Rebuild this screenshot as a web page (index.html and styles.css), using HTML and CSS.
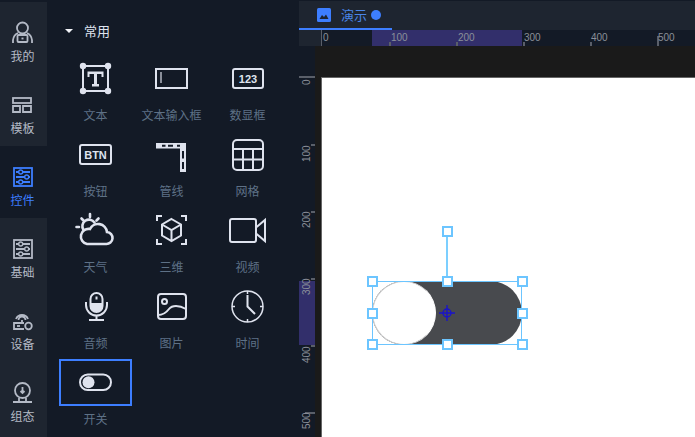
FILE: index.html
```html
<!DOCTYPE html>
<html lang="en">
<head>
    <meta charset="UTF-8">
    <meta name="viewport" content="width=device-width, initial-scale=1.0">
    <title>组态编辑器</title>
    <link rel="stylesheet" href="styles.css">
</head>
<body>
    <div class="app">
        <nav class="nav">
            <div class="nav-item">
                <svg class="nav-icon" viewBox="0 0 25 25">
                    <circle cx="12.5" cy="8" r="5.5"/>
                    <path d="M3 23v-3a9 9 0 0 1 5-7M22 23v-3a9 9 0 0 0-5-7"/>
                    <rect x="7.500" y="15" width="10" height="7" rx="1"/>
                    <path d="M11.500 18.500h2"/>
                </svg>
                <span>我的</span>
            </div>
            <div class="nav-item">
                <svg class="nav-icon" viewBox="0 0 25 25">
                    <rect x="3" y="6" width="18" height="5"/>
                    <path d="M3 14h7v6H3zM13 14h8v6h-8z"/>
                </svg>
                <span>模板</span>
            </div>
            <div class="nav-item active">
                <svg class="nav-icon" viewBox="0 0 25 25">
                    <rect x="4" y="4" width="18" height="18"/>
                    <path d="M6 8h14M6 13h14M6 18h14"/>
                    <circle class="knob" cx="10.700" cy="8" r="2"/>
                    <circle class="knob" cx="16.700" cy="13" r="2"/>
                    <circle class="knob" cx="10.700" cy="18" r="2"/>
                </svg>
                <span>控件</span>
            </div>
            <div class="nav-item">
                <svg class="nav-icon" viewBox="0 0 25 25">
                    <rect x="4" y="4" width="18" height="18"/>
                    <path d="M6 8h14M6 13h14M6 18h14"/>
                    <circle class="knob" cx="10.700" cy="8" r="2"/>
                    <circle class="knob" cx="16.700" cy="13" r="2"/>
                    <circle class="knob" cx="10.700" cy="18" r="2"/>
                </svg>
                <span>基础</span>
            </div>
            <div class="nav-item">
                <svg class="nav-icon" viewBox="0 0 25 25">
                    <path d="M6 11a6.500 6.500 0 0 1 12 0M8.500 12a3.500 3.500 0 0 1 7 0"/>
                    <path d="M12 12v3M14 15H4v6h10"/>
                    <circle cx="18.500" cy="18" r="3.300"/>
                    <path d="M7 18h3"/>
                </svg>
                <span>设备</span>
            </div>
            <div class="nav-item">
                <svg class="nav-icon" viewBox="0 0 25 25">
                    <circle cx="12.500" cy="10.500" r="7.500"/>
                    <path d="M12.500 7v5M10.500 11l2 2 2-2M9 18v3M16 18v3M3 22h19"/>
                </svg>
                <span>组态</span>
            </div>
        </nav>

        <aside class="panel">
            <div class="panel-title"><i class="caret"></i>常用</div>
            <div class="widget-grid">
                <div class="widget">
                    <div class="widget-box">
                        <svg class="widget-icon" viewBox="0 0 41 37">
                            <rect x="8" y="6" width="25" height="25"/>
                            <g class="solid">
                                <circle cx="8" cy="6" r="3.200"/>
                                <circle cx="33" cy="6" r="3.200"/>
                                <circle cx="8" cy="31" r="3.200"/>
                                <circle cx="33" cy="31" r="3.200"/>
                                <path d="M12.500 11.500h16v5.500h-2v-3h-4.500v10h2v2.500h-7v-2.500h2v-10h-4.500v3h-2z"/>
                            </g>
                        </svg>
                    </div>
                    <div class="widget-name">文本</div>
                </div>
                <div class="widget">
                    <div class="widget-box">
                        <svg class="widget-icon" viewBox="0 0 41 37">
                            <rect x="5" y="9" width="31" height="19"/>
                            <path class="dim" d="M10 12v11"/>
                        </svg>
                    </div>
                    <div class="widget-name">文本输入框</div>
                </div>
                <div class="widget">
                    <div class="widget-box">
                        <svg class="widget-icon" viewBox="0 0 41 37">
                            <rect x="6" y="9" width="30" height="19" rx="2"/>
                            <text x="21" y="23" class="icon-text">123</text>
                        </svg>
                    </div>
                    <div class="widget-name">数显框</div>
                </div>
                <div class="widget">
                    <div class="widget-box">
                        <svg class="widget-icon" viewBox="0 0 41 37">
                            <rect x="5" y="9" width="31" height="19" rx="2"/>
                            <text x="20.500" y="22.500" class="icon-text">BTN</text>
                        </svg>
                    </div>
                    <div class="widget-name">按钮</div>
                </div>
                <div class="widget">
                    <div class="widget-box">
                        <svg class="widget-icon" viewBox="0 0 41 37">
                            <path class="solid" d="M5 7h30v29h-6V12.500H5z"/>
                            <path class="gap" d="M11 9.750h3.500M17 9.750h5M26 9.750h3M32 15v7.500M32 26v7"/>
                        </svg>
                    </div>
                    <div class="widget-name">管线</div>
                </div>
                <div class="widget">
                    <div class="widget-box">
                        <svg class="widget-icon" viewBox="0 0 41 37">
                            <rect x="6" y="4" width="30" height="30" rx="4"/>
                            <path d="M6 13h30M6 23.500h30M16 13v21M26 13v21"/>
                        </svg>
                    </div>
                    <div class="widget-name">网格</div>
                </div>
                <div class="widget">
                    <div class="widget-box">
                        <svg class="widget-icon bold" viewBox="0 0 41 37">
                            <path d="M12 32h19a6 6 0 0 0 1-12 9 9 0 0 0-17-3 7.500 7.500 0 0 0-3 15z"/>
                            <path d="M8.500 18a6.500 6.500 0 0 1 11-7.500M15 2v3M4 15H1.500M6.500 6.500l2 2M23.500 6.500l-2 2"/>
                        </svg>
                    </div>
                    <div class="widget-name">天气</div>
                </div>
                <div class="widget">
                    <div class="widget-box">
                        <svg class="widget-icon" viewBox="0 0 41 37">
                            <path d="M6 9V4h5M30 4h5v5M35 27v5h-5M11 32H6v-5"/>
                            <path d="M20.500 7l9.500 5.500v11L20.500 29 11 23.500v-11zM11 12.500l9.500 5.500 9.500-5.500M20.500 18v11"/>
                        </svg>
                    </div>
                    <div class="widget-name">三维</div>
                </div>
                <div class="widget">
                    <div class="widget-box">
                        <svg class="widget-icon" viewBox="0 0 41 37">
                            <rect x="3" y="7" width="26" height="23" rx="2"/>
                            <path d="M29 15.500L38 8v21l-9-7.500"/>
                        </svg>
                    </div>
                    <div class="widget-name">视频</div>
                </div>
                <div class="widget">
                    <div class="widget-box">
                        <svg class="widget-icon" viewBox="0 0 41 37">
                            <rect x="15.500" y="5" width="12" height="19" rx="6"/>
                            <path class="solid" d="M15.500 15h12v3a6 6 0 0 1-12 0z"/>
                            <path d="M21.500 8.500v3M11 14v3a10.500 10.500 0 0 0 21 0v-3M21.500 28v4M14 32h15"/>
                        </svg>
                    </div>
                    <div class="widget-name">音频</div>
                </div>
                <div class="widget">
                    <div class="widget-box">
                        <svg class="widget-icon" viewBox="0 0 41 37">
                            <rect x="7" y="6" width="28" height="25" rx="3"/>
                            <circle cx="13.500" cy="13.500" r="2.500"/>
                            <path d="M7 27c5 0 8-2 11-6 3-4 10-4 17 0"/>
                        </svg>
                    </div>
                    <div class="widget-name">图片</div>
                </div>
                <div class="widget">
                    <div class="widget-box">
                        <svg class="widget-icon thin" viewBox="0 0 41 37">
                            <circle cx="20.500" cy="18.500" r="15.500"/>
                            <path d="M20.500 3v3M20.500 31v3M5 18.500h3M33 18.500h3"/>
                            <path class="hand" d="M20.500 7v11.500L28 26"/>
                        </svg>
                    </div>
                    <div class="widget-name">时间</div>
                </div>
                <div class="widget selected">
                    <div class="widget-box">
                        <svg class="widget-icon" viewBox="0 0 41 37">
                            <rect x="5" y="10.500" width="31" height="15.500" rx="7.750"/>
                            <circle class="solid" cx="13.500" cy="18.250" r="6"/>
                        </svg>
                    </div>
                    <div class="widget-name">开关</div>
                </div>
            </div>
        </aside>

        <main class="editor">
            <div class="tabs">
                <div class="tab">
                    <svg class="tab-icon" viewBox="0 0 14 14">
                        <rect width="14" height="14" rx="1.500" fill="#3d7eff"/>
                        <path d="M2.500 11l2.500-4 2 2 2-2.500 2.500 4.500z" fill="#1e2530"/>
                    </svg>
                    <span>演示</span>
                    <i class="tab-dot"></i>
                </div>
            </div>

            <div class="ruler-row">
                <div class="ruler-corner"></div>
                <svg class="ruler-h" width="374" height="16">
                    <rect x="51" width="150" height="16" class="ruler-range"/>
                    <rect x="0" width="1" height="16" class="tick"/>
                    <rect x="68" y="12" width="2" height="4" class="tick"/>
                    <rect x="135" y="12" width="2" height="4" class="tick"/>
                    <rect x="202" y="12" width="2" height="4" class="tick"/>
                    <rect x="269" y="12" width="2" height="4" class="tick"/>
                    <rect x="336" y="6" width="2" height="10" class="tick"/>
                    <text x="2" y="11">0</text>
                    <text x="70" y="11">100</text>
                    <text x="137" y="11">200</text>
                    <text x="203" y="11">300</text>
                    <text x="270" y="11">400</text>
                    <text x="337" y="11">500</text>
                </svg>
            </div>

            <div class="work">
                <svg class="ruler-v" width="16" height="391">
                    <rect y="235" width="16" height="64" class="ruler-range"/>
                    <rect y="30" width="16" height="2" class="tick"/>
                    <rect x="12" y="98" width="4" height="2" class="tick"/>
                    <rect x="12" y="165" width="4" height="2" class="tick"/>
                    <rect x="12" y="232" width="4" height="2" class="tick"/>
                    <rect x="12" y="299" width="4" height="2" class="tick"/>
                    <rect x="6" y="366" width="10" height="2" class="tick"/>
                    <text transform="translate(11 39) rotate(-90)">0</text>
                    <text transform="translate(11 116) rotate(-90)">100</text>
                    <text transform="translate(11 182) rotate(-90)">200</text>
                    <text transform="translate(11 249) rotate(-90)">300</text>
                    <text transform="translate(11 317) rotate(-90)">400</text>
                    <text transform="translate(11 383) rotate(-90)">500</text>
                </svg>
                <div class="stage">
                    <div class="canvas">
                        <div class="switch"><i class="switch-knob"></i></div>
                        <div class="selection">
                            <i class="rotate-line"></i>
                            <i class="handle h-rotate"></i>
                            <i class="handle h-tl"></i>
                            <i class="handle h-tm"></i>
                            <i class="handle h-tr"></i>
                            <i class="handle h-ml"></i>
                            <i class="handle h-mr"></i>
                            <i class="handle h-bl"></i>
                            <i class="handle h-bm"></i>
                            <i class="handle h-br"></i>
                            <svg class="pivot" viewBox="0 0 16 16">
                                <circle cx="8" cy="8" r="4"/>
                                <path d="M0 8h16M8 0v16"/>
                            </svg>
                        </div>
                    </div>
                </div>
            </div>
        </main>
    </div>
</body>
</html>
```

FILE: styles.css
```css
* {
    box-sizing: border-box;
}
html, body {
    margin: 0;
    height: 100%;
    overflow: hidden;
}
body {
    font-family: "Noto Sans CJK SC", "Noto Sans", sans-serif;
    font-size: 12px;
    background: #131a26;
}
.app {
    display: flex;
    width: 695px;
    height: 437px;
}

/* left nav */
.nav {
    width: 47px;
    margin-top: 2px;
    background: #1e2530;
    padding-right: 2px;
    color: #b4bac6;
    flex: none;
}
.nav-item {
    position: relative;
    height: 72px;
    padding-top: 18px;
    display: flex;
    flex-direction: column;
    align-items: center;
    gap: 2px;
    line-height: 18px;
}
.nav-item.active {
    color: #3d7eff;
}
.nav-item.active::before {
    content: "";
    position: absolute;
    inset: 0 -2px 0 0;
    background: #131a26;
}
.nav-item > * {
    position: relative;
}
.nav-icon {
    width: 25px;
    height: 25px;
    fill: none;
    stroke: currentColor;
    stroke-width: 1.8;
}
.nav-icon .knob {
    fill: #1e2530;
    stroke-width: 1.4;
}
.nav-item.active .knob {
    fill: #131a26;
}

/* widget panel */
.panel {
    width: 252px;
    padding: 19px 0 0 10px;
    flex: none;
}
.panel-title {
    height: 24px;
    line-height: 24px;
    padding-left: 8px;
    margin-bottom: 12px;
    color: #dfe3ee;
    font-size: 13px;
    display: flex;
    align-items: center;
}
.caret {
    width: 0;
    height: 0;
    margin-right: 11px;
    border: 4px solid transparent;
    border-top-color: #f2f4f8;
    border-bottom-width: 0;
}
.widget-grid {
    display: grid;
    grid-template-columns: repeat(3, 76px);
    grid-auto-rows: 76px;
}
.widget {
    padding: 0 1px 0 2px;
}
.widget-box {
    height: 47px;
    border: 2px solid transparent;
    display: flex;
    align-items: center;
    justify-content: center;
}
.selected .widget-box {
    border-color: #3d7eff;
}
.widget-name {
    height: 26px;
    line-height: 26px;
    text-align: center;
    color: #5e7186;
    white-space: nowrap;
}
.widget-icon {
    width: 41px;
    height: 37px;
    flex: none;
    fill: none;
    stroke: #dfe3ee;
    stroke-width: 2;
}
.widget-icon .solid {
    fill: #dfe3ee;
    stroke: none;
}
.widget-icon .dim {
    stroke: #8a8f9a;
}
.widget-icon .gap {
    stroke: #131a26;
}
.widget-icon.thin {
    stroke-width: 1.5;
}
.widget-icon.bold {
    stroke-width: 2.6;
    stroke-linecap: round;
}
.widget-icon .hand {
    stroke-width: 2;
}
.icon-text {
    font-family: "Liberation Sans", sans-serif;
    font-size: 11px;
    font-weight: 700;
    text-anchor: middle;
    fill: #dfe3ee;
    stroke: none;
}

/* editor */
.editor {
    flex: 1;
    display: flex;
    flex-direction: column;
    min-width: 0;
}
.tabs {
    height: 30px;
    flex: none;
    margin-top: 1px;
    margin-bottom: -1px;
    background: #1e2530;
}
.tab {
    width: 93px;
    height: 29px;
    padding-left: 18px;
    border-bottom: 2px solid #3d7eff;
    display: flex;
    align-items: center;
    color: #4a85e8;
    font-size: 13px;
}
.tab-icon {
    width: 14px;
    height: 14px;
    margin-right: 10px;
}
.tab-dot {
    width: 10px;
    height: 10px;
    margin-left: 4px;
    border-radius: 50%;
    background: #3d7eff;
}
.ruler-row {
    height: 16px;
    flex: none;
    display: flex;
}
.ruler-corner {
    width: 22px;
    background: #1e2530;
}
.ruler-h, .ruler-v {
    display: block;
    background: #131a26;
    flex: none;
}
.ruler-h text, .ruler-v text {
    font-family: "Liberation Sans", sans-serif;
    font-size: 10px;
    fill: #8a8f99;
}
.ruler-range {
    fill: #322f6b;
}
.tick {
    fill: #5a5f69;
}
.work {
    flex: 1;
    display: flex;
    min-height: 0;
}
.stage {
    flex: 1;
    background: #1a1a1a;
    padding: 31px 0 0 6px;
    min-width: 0;
}
.canvas {
    position: relative;
    height: 100%;
    background: #fff;
    border-top: 1px solid #666;
    border-left: 1px solid #666;
}

/* switch sits on the free canvas */
.switch {
    position: absolute;
    left: 50px;
    top: 203px;
    width: 150px;
    height: 64px;
    border-radius: 32px;
    background: #484a4e;
}
.switch-knob {
    display: block;
    width: 64px;
    height: 64px;
    border-radius: 50%;
    background: #fff;
    border: 1px solid #d4d4d4;
    border-right-color: #fff;
}
.selection {
    position: absolute;
    left: 50px;
    top: 203px;
    width: 150px;
    height: 64px;
    border: 1px solid #6cc5ff;
}
.rotate-line {
    position: absolute;
    left: 73px;
    top: -50px;
    width: 2px;
    height: 50px;
    background: #7ccfff;
}
.handle {
    position: absolute;
    width: 11px;
    height: 11px;
    background: #fff;
    border: 2px solid #6cc5ff;
}
.h-rotate { left: 69px; top: -56px; }
.h-tl { left: -6px; top: -6px; }
.h-tm { left: 69px; top: -6px; }
.h-tr { left: 144px; top: -6px; }
.h-ml { left: -6px; top: 26px; }
.h-mr { left: 144px; top: 26px; }
.h-bl { left: -6px; top: 57px; }
.h-bm { left: 69px; top: 57px; }
.h-br { left: 144px; top: 57px; }
.pivot {
    position: absolute;
    left: 66px;
    top: 23px;
    width: 16px;
    height: 16px;
    fill: none;
    stroke: #1a14c8;
    stroke-width: 1.4;
}
```
